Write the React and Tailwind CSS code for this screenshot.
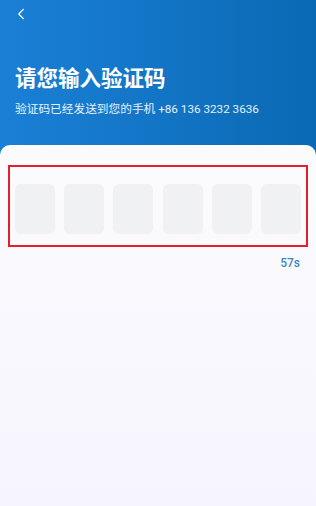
import { ChevronLeft } from 'lucide-react';

const FONT = { fontFamily: '"Roboto", "Noto Sans CJK SC", sans-serif' };

export default function App() {
  const cells = [0, 1, 2, 3, 4, 5];

  return (
    <div className="w-[316px] h-[506px] flex flex-col bg-gradient-to-r from-[#1a80d6] to-[#0a69b4] overflow-hidden" style={FONT}>
      {/* Header */}
      <div className="h-[145px] shrink-0 px-[15px] flex flex-col">
        <div className="pt-[5px]">
          <ChevronLeft className="w-[18px] h-[18px] -ml-[3px] text-white" strokeWidth={1.6} />
        </div>
        <h1 className="mt-[42px] text-[21.5px] leading-[28px] font-bold text-white">请您输入验证码</h1>
        <p className="mt-[8px] text-[11.7px] leading-[16px] text-white/90">验证码已经发送到您的手机 +86 136 3232 3636</p>
      </div>

      {/* Card */}
      <div className="flex-1 rounded-t-[10px] bg-gradient-to-b from-[#fbfbfd] to-[#f6f5fe] px-[8px] pt-[20px]">
        <div className="border-[2px] border-[#e41f2c] h-[82px] flex items-start justify-between px-[5px] pt-[17px]">
          {cells.map((i) => (
            <div key={i} className="w-[40px] h-[50px] rounded-[6px] bg-[#f0f1f3]" />
          ))}
        </div>
        <div className="flex justify-end pr-[8px] mt-[9px]">
          <span className="text-[12px] leading-[14px] font-medium text-[#3d86c6]">57s</span>
        </div>
      </div>
    </div>
  );
}
